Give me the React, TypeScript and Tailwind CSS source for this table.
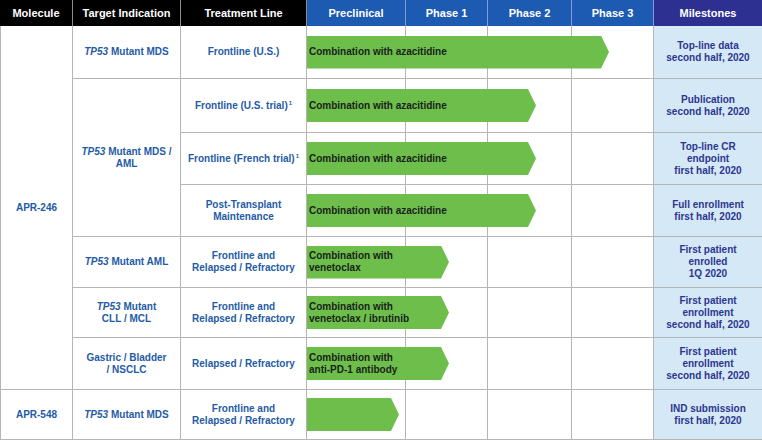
import type { ReactNode } from 'react';

const ROW_START = [
  'row-start-2',
  'row-start-3',
  'row-start-4',
  'row-start-5',
  'row-start-6',
  'row-start-7',
  'row-start-8',
  'row-start-9',
];

const line = 'border-[#b5b5b5]';
const blue = 'text-[#1f5ba6]';

interface Row {
  treatment: ReactNode;
  barWidth: string;
  bar: ReactNode;
  milestone: string[];
}

const rows: Row[] = [
  {
    treatment: 'Frontline (U.S.)',
    barWidth: 'w-[302px]',
    bar: 'Combination with azacitidine',
    milestone: ['Top-line data', 'second half, 2020'],
  },
  {
    treatment: (
      <>
        Frontline (U.S. trial)<sup className="relative -top-[4px] ml-[1px] text-[6px] leading-none">1</sup>
      </>
    ),
    barWidth: 'w-[229px]',
    bar: 'Combination with azacitidine',
    milestone: ['Publication', 'second half, 2020'],
  },
  {
    treatment: (
      <>
        Frontline (French trial)<sup className="relative -top-[4px] ml-[1px] text-[6px] leading-none">1</sup>
      </>
    ),
    barWidth: 'w-[229px]',
    bar: 'Combination with azacitidine',
    milestone: ['Top-line CR', 'endpoint', 'first half, 2020'],
  },
  {
    treatment: (
      <>
        Post-Transplant
        <br />
        Maintenance
      </>
    ),
    barWidth: 'w-[229px]',
    bar: 'Combination with azacitidine',
    milestone: ['Full enrollment', 'first half, 2020'],
  },
  {
    treatment: (
      <>
        Frontline and
        <br />
        Relapsed / Refractory
      </>
    ),
    barWidth: 'w-[142px]',
    bar: (
      <>
        Combination with
        <br />
        venetoclax
      </>
    ),
    milestone: ['First patient', 'enrolled', '1Q 2020'],
  },
  {
    treatment: (
      <>
        Frontline and
        <br />
        Relapsed / Refractory
      </>
    ),
    barWidth: 'w-[142px]',
    bar: (
      <>
        Combination with
        <br />
        venetoclax / ibrutinib
      </>
    ),
    milestone: ['First patient', 'enrollment', 'second half, 2020'],
  },
  {
    treatment: 'Relapsed / Refractory',
    barWidth: 'w-[142px]',
    bar: (
      <>
        Combination with
        <br />
        anti-PD-1 antibody
      </>
    ),
    milestone: ['First patient', 'enrollment', 'second half, 2020'],
  },
  {
    treatment: (
      <>
        Frontline and
        <br />
        Relapsed / Refractory
      </>
    ),
    barWidth: 'w-[92px]',
    bar: '',
    milestone: ['IND submission', 'first half, 2020'],
  },
];

const targets: { start: string; span: string; label: ReactNode }[] = [
  { start: 'row-start-2', span: 'row-span-1', label: <><i>TP53</i> Mutant MDS</> },
  { start: 'row-start-3', span: 'row-span-3', label: <><i>TP53</i> Mutant MDS /<br />AML</> },
  { start: 'row-start-6', span: 'row-span-1', label: <><i>TP53</i> Mutant AML</> },
  { start: 'row-start-7', span: 'row-span-1', label: <><i>TP53</i> Mutant<br />CLL / MCL</> },
  { start: 'row-start-8', span: 'row-span-1', label: <>Gastric / Bladder<br />/ NSCLC</> },
  { start: 'row-start-9', span: 'row-span-1', label: <><i>TP53</i> Mutant MDS</> },
];

const phaseCols = ['col-start-4', 'col-start-5', 'col-start-6', 'col-start-7'];

function HeaderCell({ children, className }: { children: ReactNode; className: string }) {
  return (
    <div className={`row-start-1 flex items-center justify-center text-[11px] font-bold text-white ${className}`}>
      {children}
    </div>
  );
}

export default function App() {
  return (
    <div className="h-[440px] w-[762px] overflow-hidden bg-white font-['Liberation_Sans',Arial,sans-serif]">
      <div className="grid grid-cols-[73px_108px_126px_99px_82px_84px_82px_108px] grid-rows-[26px_53px_54px_52px_52px_51px_50px_52px_50px]">
        {/* Header */}
        <HeaderCell className="col-start-1 border-r border-[#8c8c8c] bg-black">Molecule</HeaderCell>
        <HeaderCell className="col-start-2 border-r border-[#8c8c8c] bg-black">Target Indication</HeaderCell>
        <HeaderCell className="col-start-3 border-r border-[#8c8c8c] bg-black">Treatment Line</HeaderCell>
        <HeaderCell className="col-start-4 border-r border-[#7f9fd3] bg-[#1d5ab2]">Preclinical</HeaderCell>
        <HeaderCell className="col-start-5 border-r border-[#7f9fd3] bg-[#1d5ab2]">Phase 1</HeaderCell>
        <HeaderCell className="col-start-6 border-r border-[#7f9fd3] bg-[#1d5ab2]">Phase 2</HeaderCell>
        <HeaderCell className="col-start-7 border-r border-[#7f9fd3] bg-[#1d5ab2]">Phase 3</HeaderCell>
        <HeaderCell className="col-start-8 bg-[#2d3090]">Milestones</HeaderCell>

        {/* Molecule */}
        <div className={`col-start-1 row-start-2 row-span-7 flex items-center justify-center border-b border-l border-r ${line} text-[10px] font-bold ${blue}`}>
          APR-246
        </div>
        <div className={`col-start-1 row-start-9 flex items-center justify-center border-b border-l border-r ${line} text-[10px] font-bold ${blue}`}>
          APR-548
        </div>

        {/* Target indication */}
        {targets.map((t, i) => (
          <div
            key={i}
            className={`col-start-2 ${t.start} ${t.span} flex items-center justify-center border-b border-r ${line} px-1 text-center text-[10px] leading-[12px] font-bold ${blue}`}
          >
            <span>{t.label}</span>
          </div>
        ))}

        {rows.map((r, i) => (
          <div key={i} className="contents">
            {/* Treatment line */}
            <div
              className={`col-start-3 ${ROW_START[i]} flex items-center justify-center border-b border-r ${line} text-center text-[10px] leading-[12px] font-bold ${blue}`}
            >
              <span>{r.treatment}</span>
            </div>

            {/* Phase grid cells */}
            {phaseCols.map((c) => (
              <div key={c} className={`${c} ${ROW_START[i]} border-b border-r ${line}`} />
            ))}

            {/* Progress bar */}
            <div className={`col-start-4 col-span-4 ${ROW_START[i]} z-10 flex items-center pb-[1px]`}>
              <div
                className={`${r.barWidth} flex h-[33px] items-center bg-[#6dbe4b] pl-[2px] text-[10px] leading-[12px] font-bold text-[#1a1f1a] [clip-path:polygon(0_0,calc(100%-8px)_0,100%_50%,calc(100%-8px)_100%,0_100%)]`}
              >
                <span>{r.bar}</span>
              </div>
            </div>

            {/* Milestone */}
            <div
              className={`col-start-8 ${ROW_START[i]} flex flex-col items-center justify-center border-b ${line} bg-[#d5e8f6] text-center text-[10px] leading-[12px] font-bold text-[#2c3690]`}
            >
              {r.milestone.map((m, j) => (
                <span key={j}>{m}</span>
              ))}
            </div>
          </div>
        ))}
      </div>
    </div>
  );
}
